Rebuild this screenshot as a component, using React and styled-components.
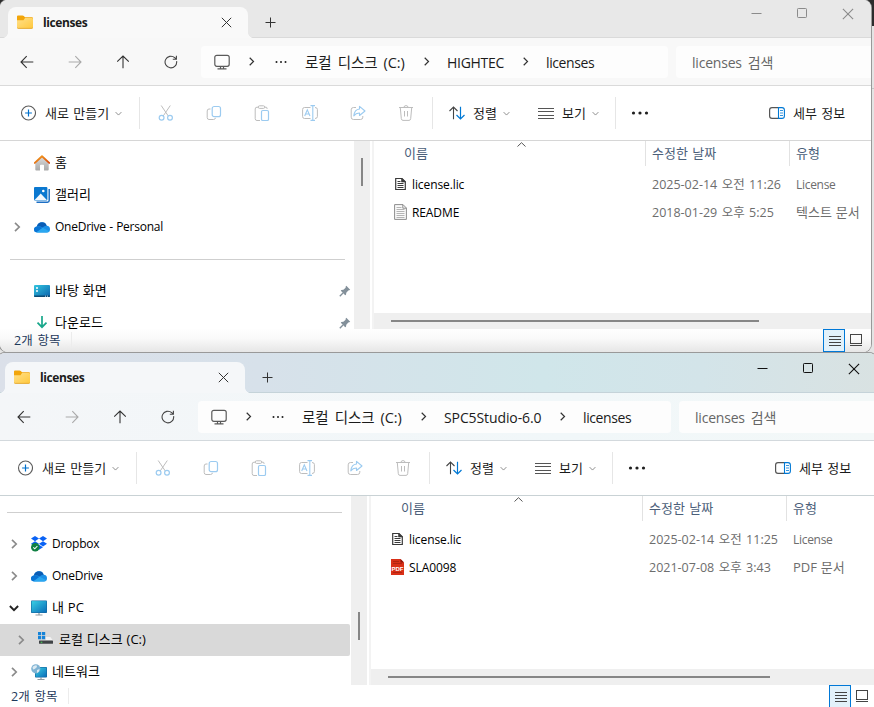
import React from "react"
import styled, { createGlobalStyle, css } from "styled-components"

const FONT = `"Open Sans", "Noto Sans CJK KR", sans-serif`

/* ---------- icons ---------- */

const FolderIcon = () => (
  <svg width="16" height="14" viewBox="0 0 16 14">
    <defs>
      <linearGradient id="folder" x1="0" y1="0" x2="1" y2="1">
        <stop offset="0" stopColor="#ffe08a" />
        <stop offset="1" stopColor="#ffc83d" />
      </linearGradient>
    </defs>
    <path d="M0 1.5Q0 .5 1 .5H5.5Q6.300 .5 6.800 1L8 2.300H15Q16 2.300 16 3.300V8H0Z" fill="#f2a50a" />
    <path d="M0 5.200H6.500L8 3H15Q16 3 16 4V12.500Q16 13.500 15 13.500H1Q0 13.500 0 12.500Z" fill="url(#folder)" />
    <path d="M.3 12.700Q.5 13.400 1.200 13.400H14.800Q15.500 13.400 15.700 12.700" stroke="#e0a020" strokeWidth=".8" fill="none" />
  </svg>
)

const CloseIcon = ({ size = 11 }) => (
  <svg width={size} height={size} viewBox="0 0 11 11" fill="none" stroke="currentColor" strokeWidth="1">
    <path d="M.8.8L10.200 10.200M10.200.8L.8 10.200" />
  </svg>
)

const PlusIcon = () => (
  <svg width="11" height="11" viewBox="0 0 11 11" stroke="#333">
    <path d="M5.500 .5V10.500M.5 5.500H10.500" />
  </svg>
)

const MinimizeIcon = () => (
  <svg width="12" height="11" viewBox="0 0 12 11" stroke="currentColor">
    <path d="M1.500 5.500H11.500" />
  </svg>
)

const MaximizeIcon = () => (
  <svg width="12" height="11" viewBox="0 0 12 11" fill="none" stroke="currentColor">
    <rect x="1.500" y=".5" width="9" height="9" rx=".8" />
  </svg>
)

const ArrowIcon = ({ turn = 0, color = "#333" }) => (
  <svg width="14" height="14" viewBox="0 0 14 14" fill="none" stroke={color} strokeWidth="1.100">
    <path transform={`rotate(${turn} 7 7)`} d="M6.700 1.200L1 7L6.700 12.800M1 7H13.300" />
  </svg>
)

const RefreshIcon = () => (
  <svg width="14" height="14" viewBox="0 0 14 14" fill="none" stroke="#444" strokeWidth="1.100">
    <path d="M12.600 6.200A5.800 5.800 0 1 1 10.700 2.700L12.300 4.200M12.400 .8V4.300H8.800" />
  </svg>
)

const MonitorIcon = () => (
  <svg width="16" height="16" viewBox="0 0 16 16" fill="none" stroke="#5a5a5a" strokeWidth="1.200">
    <rect x=".8" y="1.300" width="14.400" height="11" rx="2" />
    <path d="M6.500 12.500V14.600M9.500 12.500V14.600M3.500 14.800H12.500" />
  </svg>
)

const ChevronIcon = ({ color = "#333", stroke = 1.2, down, size = 9 }) => (
  <svg width={size} height={size} viewBox="0 0 9 9" fill="none" stroke={color} strokeWidth={stroke}>
    <path transform={down ? "rotate(90 4.5 4.5)" : undefined} d="M2.700 .8L6.500 4.500L2.700 8.200" />
  </svg>
)

const DotsIcon = ({ gap = 5, r = 1.1 }) => (
  <svg width="18" height="4" viewBox="0 0 18 4" fill="#1f1f1f">
    <circle cx={9 - gap} cy="2" r={r} />
    <circle cx="9" cy="2" r={r} />
    <circle cx={9 + gap} cy="2" r={r} />
  </svg>
)

const NewIcon = () => (
  <svg width="16" height="16" viewBox="0 0 16 16" fill="none">
    <circle cx="8.500" cy="8" r="7" stroke="#5c5c5c" strokeWidth="1.100" />
    <path d="M8.500 4.600V11.400M5.100 8H11.900" stroke="#0070cc" strokeWidth="1.200" />
  </svg>
)

const CutIcon = () => (
  <svg width="16" height="16" viewBox="0 0 16 16" fill="none">
    <path d="M3.200 .5L10.300 11M12.300 .5L5.200 11" stroke="#bdbdbd" />
    <circle cx="3.600" cy="12.700" r="2.400" stroke="#9ccbf0" strokeWidth="1.200" />
    <circle cx="12" cy="12.700" r="2.400" stroke="#9ccbf0" strokeWidth="1.200" />
  </svg>
)

const CopyIcon = () => (
  <svg width="16" height="16" viewBox="0 0 16 16" fill="none">
    <path d="M4.500 4H3Q1.200 4 1.200 6V12.500Q1.200 14.500 3 14.500H7.500Q9.300 14.500 9.500 12.800" stroke="#bdbdbd" />
    <rect x="6.200" y="1.500" width="8.300" height="10.200" rx="2" stroke="#9ccbf0" strokeWidth="1.200" />
  </svg>
)

const PasteIcon = () => (
  <svg width="16" height="16" viewBox="0 0 16 16" fill="none">
    <path d="M6 15.500H3Q1.200 15.500 1.200 13.700V4Q1.200 2.200 3 2.200H4.500M10.500 2.200H12Q13 2.200 13 3.200V4" stroke="#bdbdbd" />
    <rect x="4.300" y=".8" width="6.400" height="2.600" rx="1.200" stroke="#bdbdbd" />
    <rect x="7.500" y="5.500" width="7" height="10" rx="1.300" stroke="#9ccbf0" strokeWidth="1.200" />
  </svg>
)

const RenameIcon = () => (
  <svg width="16" height="16" viewBox="0 0 16 16" fill="none">
    <path d="M8.500 2.500H2.500Q.6 2.500 .6 4.500V11.500Q.6 13.500 2.500 13.500H8.500M13 2.500Q15.400 2.500 15.400 4.500V11.500Q15.400 13.500 13 13.500" stroke="#bdbdbd" />
    <path d="M10.800 .8V15.200M8.500 .6H13M8.500 15.400H13M2.700 11L5.300 4.800L8 11M3.600 9H7" stroke="#9ccbf0" strokeWidth="1.100" />
  </svg>
)

const ShareIcon = () => (
  <svg width="16" height="16" viewBox="0 0 16 16" fill="none">
    <path d="M6 2.500H3.500Q1.200 2.500 1.200 4.800V12.200Q1.200 14.500 3.500 14.500H10.500Q12.800 14.500 12.800 12.200V11" stroke="#bdbdbd" />
    <path d="M9.500 1.300L15 6L9.500 10.500V8Q6 7.800 3.800 10.800Q4.500 4.500 9.500 4Z" stroke="#9ccbf0" strokeWidth="1.100" strokeLinejoin="round" />
  </svg>
)

const TrashIcon = () => (
  <svg width="16" height="16" viewBox="0 0 16 16" fill="none" stroke="#bdbdbd">
    <path d="M1 2.500H15M6 2.300Q6 .6 8 .6Q10 .6 10 2.300M2.300 2.700L3.300 13.600Q3.500 15.400 5 15.400H11Q12.500 15.400 12.700 13.600L13.700 2.700M6.500 6V11.500M9.500 6V11.500" />
  </svg>
)

const SortIcon = () => (
  <svg width="17" height="14" viewBox="0 0 17 14" fill="none">
    <path d="M4.500 13.200V1M.5 5L4.500 1L8.500 5" stroke="#444" strokeWidth="1.100" />
    <path d="M11.500 .8V13M7.500 9L11.500 13L15.500 9" stroke="#0078d4" strokeWidth="1.200" />
  </svg>
)

const ViewIcon = () => (
  <svg width="16" height="11" viewBox="0 0 16 11" stroke="#555">
    <path d="M0 .5H16M0 3.500H16M0 7.500H16M0 10.500H16" />
  </svg>
)

const DetailsIcon = () => (
  <svg width="16" height="12" viewBox="0 0 16 12" fill="none">
    <path d="M9.500 .6H3Q.6 .6 .6 3V9Q.6 11.400 3 11.400H9.500" stroke="#555" strokeWidth="1.200" />
    <path d="M9.500 .6H13Q15.400 .6 15.400 3V9Q15.400 11.400 13 11.400H9.500Z" stroke="#0078d4" strokeWidth="1.100" />
    <path d="M11 3.500H14M11 6H14M11 8.500H14" stroke="#0078d4" strokeWidth=".8" />
  </svg>
)

const HomeIcon = () => (
  <svg width="16" height="16" viewBox="0 0 16 16">
    <defs>
      <linearGradient id="wall" x1="0" y1="0" x2="0" y2="1">
        <stop offset="0" stopColor="#dcdcdc" />
        <stop offset="1" stopColor="#a9a9a9" />
      </linearGradient>
      <linearGradient id="roof" x1="0" y1="0" x2="1" y2="1">
        <stop offset="0" stopColor="#f6a21d" />
        <stop offset="1" stopColor="#d64a12" />
      </linearGradient>
    </defs>
    <path d="M1.300 7.500L8 1.500L14.700 7.500V14.500Q14.700 15.400 13.800 15.400H10V10.500Q10 9.700 9.200 9.700H6.800Q6 9.700 6 10.500V15.400H2.200Q1.300 15.400 1.300 14.500Z" fill="url(#wall)" />
    <path d="M.8 7.900L8 1.300L15.200 7.900" fill="none" stroke="url(#roof)" strokeWidth="1.900" strokeLinecap="round" strokeLinejoin="round" />
  </svg>
)

const GalleryIcon = () => (
  <svg width="16" height="16" viewBox="0 0 16 16">
    <path d="M15.200 2V13.500Q15.200 15.200 13.500 15.200H2.500" fill="none" stroke="#1c6fc4" strokeWidth="1.500" />
    <rect width="13.400" height="13.600" rx="1" fill="#0a78d0" />
    <path d="M.6 13L6.700 6.500L12.800 13Z" fill="#f2f8fd" />
    <circle cx="9.300" cy="4" r="1.300" fill="#fff" />
  </svg>
)

const CloudIcon = () => (
  <svg width="16" height="11" viewBox="0 0 16 11">
    <path d="M3.300 10.500Q0 10.500 0 7.600Q0 5 2.800 4.500Q4.200 .3 8 .3Q11.600 .3 12.700 3.700Q16 4 16 7.200Q16 10.500 12.700 10.500Z" fill="#1b8fe6" />
    <path d="M2.800 4.500Q4.200 .3 8 .3Q11.600 .3 12.700 3.700Q10.500 3.500 8.500 5.500Q5.500 3.600 2.800 4.500Z" fill="#0a5db5" />
    <path d="M2.500 10.300Q0 10 0 7.600Q.2 4.800 3 4.500Q5.500 4 8.500 6Z" fill="#0a74d4" />
    <path d="M2.500 10.300L8.700 5.700L15.300 9.200Q14.400 10.500 12.700 10.500H3.300Z" fill="#2aa7f0" />
  </svg>
)

const DesktopIcon = () => (
  <svg width="16" height="12" viewBox="0 0 16 12">
    <defs>
      <linearGradient id="desk" x1="0" y1="0" x2="1" y2="1">
        <stop offset="0" stopColor="#33c6df" />
        <stop offset="1" stopColor="#0a62ae" />
      </linearGradient>
    </defs>
    <rect width="16" height="12" rx="1" fill="url(#desk)" />
    <path d="M0 10.500H16V11Q16 12 15 12H1Q0 12 0 11Z" fill="#0b4a75" />
    <path d="M2 3H4M2 6H4" stroke="#fff" strokeWidth="1.500" />
    <path d="M11 11.200H12M13 11.200H14" stroke="#fff" strokeWidth=".8" />
  </svg>
)

const DownloadIcon = () => (
  <svg width="16" height="16" viewBox="0 0 16 16" fill="none" stroke="#18a78b" strokeWidth="1.700">
    <path d="M8 1V12M3.500 7.700L8 12.200L12.500 7.700" />
  </svg>
)

const PinIcon = () => (
  <svg width="12" height="12" viewBox="0 0 12 12">
    <path d="M7.300 .8L11.200 4.700L10.300 5.300L9.300 5.400L7.300 7.700L7 9.800L6.200 10.200L1.800 5.800L2.300 5L4.400 4.700L6.600 2.700L6.700 1.500Z" fill="#83909a" />
    <path d="M4 8L.8 11.200" stroke="#83909a" strokeWidth="1.300" />
  </svg>
)

const DropboxIcon = () => (
  <svg width="16" height="16" viewBox="0 0 16 16">
    <g fill="#0a62f5">
      <path d="M4 0L8 2.600L4 5.200L0 2.600ZM12 0L16 2.600L12 5.200L8 2.600ZM4 5.200L8 7.800L4 10.400L0 7.800ZM12 5.200L16 7.800L12 10.400L8 7.800ZM8 8.800L12 11.300L8 13.800L4 11.300Z" />
    </g>
    <circle cx="4.300" cy="11.300" r="4.300" fill="#108043" />
    <path d="M2.300 11.300L3.800 12.800L6.400 10" fill="none" stroke="#fff" strokeWidth="1.100" />
  </svg>
)

const ScreenShape = ({ x = 0, y = 0, w = 16, h = 12.5 }) => (
  <g>
    <defs>
      <linearGradient id="screen" x1="0" y1="0" x2="1" y2="1">
        <stop offset="0" stopColor="#39d0e4" />
        <stop offset="1" stopColor="#0a6cb8" />
      </linearGradient>
    </defs>
    <path d={`M${x + w / 2} ${y + h}V${y + h + 2}M${x + w / 2 - 3.5} ${y + h + 2}H${x + w / 2 + 3.5}`} stroke="#8f9aa1" strokeWidth="1.200" />
    <rect x={x} y={y} width={w} height={h} rx=".8" fill="#15679f" />
    <rect x={x + 0.6} y={y + 0.6} width={w - 1.2} height={h - 1.2} fill="url(#screen)" />
  </g>
)

const PcIcon = () => (
  <svg width="16" height="16" viewBox="0 0 16 16">
    <ScreenShape y={0.5} />
  </svg>
)

const NetworkIcon = () => (
  <svg width="16" height="16" viewBox="0 0 16 16">
    <ScreenShape x={4} y={3} w={12} h={10.5} />
    <circle cx="4.800" cy="4.800" r="4.600" fill="#7fb3d3" />
    <path d="M1.500 3Q3.500 .8 5.500 1.200L6 3L3.800 5L2 5.500ZM6 6L8.500 5L8 7.500L6 9Z" fill="#dceaf2" />
  </svg>
)

const DriveIcon = () => (
  <svg width="16" height="16" viewBox="0 0 16 16">
    <path d="M0 0H3.200V3.200H0ZM4 0H7.200V3.200H4ZM0 4H3.200V7.200H0ZM4 4H7.200V7.200H4Z" fill="#1583d8" />
    <path d="M7.800 5H12.300L15 8.500H1.500L2.500 8H7.800Z" fill="#f2f2f2" />
    <rect x="1" y="8.500" width="14" height="3.300" rx=".6" fill="#3f4346" />
    <rect x="2.700" y="9.700" width="1.600" height="1.100" fill="#47d65b" />
  </svg>
)

const LicIcon = () => (
  <svg width="13" height="16" viewBox="0 0 13 16" fill="none" stroke="#3a3a3a">
    <path d="M1.700 2.500H8L11.300 5.700V13.500H1.700Z" strokeWidth="1.200" />
    <path d="M7.500 2V6H11.500Z" fill="#3a3a3a" strokeWidth=".6" />
    <path d="M3.500 5.500H6.500M3.500 7.500H9.500M3.500 9.500H9.500M3.500 11.500H9.500" />
  </svg>
)

const TxtIcon = () => (
  <svg width="13" height="16" viewBox="0 0 13 16" fill="none" stroke="#8d8d8d">
    <path d="M.6 .6H9L12.400 4V15.400H.6Z" fill="#fafafa" />
    <path d="M8.800 .6V4.200H12.400" />
    <path d="M2.500 3.500H7.500M2.500 5.500H10.500M2.500 7.500H10.500M2.500 9.500H10.500M2.500 11.500H10.500M2.500 13.500H10.500" stroke="#b5b5b5" />
  </svg>
)

const PdfIcon = () => (
  <svg width="13" height="16" viewBox="0 0 13 16">
    <path d="M0 0H9.500L13 3.500V16H0Z" fill="#d92f17" />
    <path d="M9.500 0L13 3.500H9.500Z" fill="#8c1408" />
    <path d="M2 2.500H8M2 4.500H11M2 13.500H11" stroke="#b02310" />
    <text x="6.500" y="11.500" textAnchor="middle" fontSize="6" fontWeight="700" fontFamily="Liberation Sans, sans-serif" fill="#fff">PDF</text>
  </svg>
)

const SortMark = () => (
  <svg width="9" height="5" viewBox="0 0 9 5" fill="none" stroke="#555">
    <path d="M.5 4.500L4.500 .7L8.500 4.500" />
  </svg>
)

const ListModeIcon = () => (
  <svg width="12" height="11" viewBox="0 0 12 11" stroke="#444">
    <path d="M0 1.500H12M0 4.500H12M0 7.500H12M0 10.500H12" />
  </svg>
)

const TileModeIcon = () => (
  <svg width="12" height="13" viewBox="0 0 12 13" fill="none" stroke="#444">
    <rect x=".5" y=".5" width="11" height="9" />
    <path d="M0 11.500H12" />
  </svg>
)

/* ---------- data ---------- */

const windows = [
  {
    id: "hightec",
    crumbs: [
      { text: "로컬 디스크 (C:)", width: 101, size: 14.5, space: -0.1 },
      { text: "HIGHTEC", width: 58, size: 14, space: -0.3 },
      { text: "licenses", width: 49, size: 14, space: -0.4 },
    ],
    nav: [
      { text: "홈", icon: <HomeIcon /> },
      { text: "갤러리", icon: <GalleryIcon /> },
      { text: "OneDrive - Personal", latin: true, icon: <CloudIcon />, closed: true },
      { line: true },
      { text: "바탕 화면", icon: <DesktopIcon />, pinned: true },
      { text: "다운로드", icon: <DownloadIcon />, pinned: true },
    ],
    files: [
      { name: "license.lic", icon: <LicIcon />, date: "2025-02-14 오전 11:26", type: "License", latinType: true },
      { name: "README", icon: <TxtIcon />, date: "2018-01-29 오후 5:25", type: "텍스트 문서" },
    ],
  },
  {
    id: "spc5",
    active: true,
    crumbs: [
      { text: "로컬 디스크 (C:)", width: 101, size: 14.5, space: -0.1 },
      { text: "SPC5Studio-6.0", width: 98, size: 14, space: -0.1 },
      { text: "licenses", width: 49, size: 14, space: -0.4 },
    ],
    nav: [
      { line: true },
      { text: "Dropbox", latin: true, icon: <DropboxIcon />, closed: true },
      { text: "OneDrive", latin: true, icon: <CloudIcon />, closed: true },
      { text: "내 PC", icon: <PcIcon />, open: true },
      { text: "로컬 디스크 (C:)", icon: <DriveIcon />, closed: true, selected: true },
      { text: "네트워크", icon: <NetworkIcon />, closed: true },
    ],
    files: [
      { name: "license.lic", icon: <LicIcon />, date: "2025-02-14 오전 11:25", type: "License", latinType: true },
      { name: "SLA0098", icon: <PdfIcon />, date: "2021-07-08 오후 3:43", type: "PDF 문서" },
    ],
  },
]

/* ---------- window ---------- */

const Explorer = ({ data }) => {
  const { active, crumbs, nav, files } = data

  return (
    <Window $active={active}>
      <TitleBar $active={active}>
        <Tab $active={active}>
          <FolderIcon />
          <TabName>licenses</TabName>
          <CloseIcon />
        </Tab>
        <NewTab>
          <PlusIcon />
        </NewTab>
        <Controls $active={active}>
          <Control>
            <MinimizeIcon />
          </Control>
          <Control>
            <MaximizeIcon />
          </Control>
          <Control>
            <CloseIcon size={12} />
          </Control>
        </Controls>
      </TitleBar>

      <AddressRow $active={active}>
        <NavButton>
          <ArrowIcon />
        </NavButton>
        <NavButton>
          <ArrowIcon turn={180} color="#aaa" />
        </NavButton>
        <NavButton>
          <ArrowIcon turn={90} />
        </NavButton>
        <NavButton>
          <RefreshIcon />
        </NavButton>
        <Address>
          <MonitorIcon />
          <CrumbArrow $before={17} $after={16}>
            <ChevronIcon />
          </CrumbArrow>
          <DotsIcon gap={4.5} r={1} />
          <CrumbGap />
          {crumbs.map((crumb, i) => (
            <React.Fragment key={crumb.text}>
              {i > 0 && (
                <CrumbArrow $before={16} $after={16}>
                  <ChevronIcon />
                </CrumbArrow>
              )}
              <Crumb $width={crumb.width} $size={crumb.size} $space={crumb.space}>
                {crumb.text}
              </Crumb>
            </React.Fragment>
          ))}
        </Address>
        <Search>licenses 검색</Search>
      </AddressRow>

      <Toolbar $active={active}>
        <ToolButton $width={139} $start={20}>
          <NewIcon />
          <ToolText $width={64} $gap={9}>새로 만들기</ToolText>
          <ChevronIcon down size={7} color="#888" />
        </ToolButton>
        <Divider />
        <Tools>
          {[CutIcon, CopyIcon, PasteIcon, RenameIcon, ShareIcon, TrashIcon].map((Icon, i) => (
            <Tool key={i}>
              <Icon />
            </Tool>
          ))}
        </Tools>
        <Divider />
        <ToolButton $width={89} $start={16}>
          <SortIcon />
          <ToolText $width={24} $gap={7}>정렬</ToolText>
          <ChevronIcon down size={7} color="#888" />
        </ToolButton>
        <ToolButton $width={93} $start={16}>
          <ViewIcon />
          <ToolText $width={24} $gap={8}>보기</ToolText>
          <ChevronIcon down size={7} color="#888" />
        </ToolButton>
        <Divider />
        <More>
          <DotsIcon gap={6.5} r={1.6} />
        </More>
        <Details>
          <DetailsIcon />
          <ToolText $width={53} $gap={8}>세부 정보</ToolText>
        </Details>
      </Toolbar>

      <Body $active={active}>
        <NavPane $active={active}>
          {nav.map((item, i) =>
            item.line ? (
              <NavLine key={i} />
            ) : (
              <NavItem key={i} $selected={item.selected}>
                <Expander>
                  {item.closed && <ChevronIcon color="#8a8a8a" stroke={1.5} size={10} />}
                  {item.open && <ChevronIcon color="#222" stroke={1.7} size={10} down />}
                </Expander>
                <NavIcon>{item.icon}</NavIcon>
                <NavText $latin={item.latin}>{item.text}</NavText>
                {item.pinned && <PinIcon />}
              </NavItem>
            )
          )}
        </NavPane>
        <VScroll $active={active}>
          <VThumb />
        </VScroll>
        <Files>
          <Header>
            <NameHead>
              이름
              <SortMark />
            </NameHead>
            <DateHead>수정한 날짜</DateHead>
            <TypeHead>유형</TypeHead>
          </Header>
          <Rows>
            {files.map(file => (
              <FileRow key={file.name}>
                <FileIcon>{file.icon}</FileIcon>
                <FileName>{file.name}</FileName>
                <FileDate>{file.date}</FileDate>
                <FileType $latin={file.latinType}>{file.type}</FileType>
              </FileRow>
            ))}
          </Rows>
          <HScroll>
            <HThumb $active={active} />
          </HScroll>
        </Files>
      </Body>

      <StatusBar $active={active}>
        <Count>2개 항목</Count>
        <ModeButton $on>
          <ListModeIcon />
        </ModeButton>
        <ModeButton>
          <TileModeIcon />
        </ModeButton>
      </StatusBar>
    </Window>
  )
}

const App = () => (
  <Desktop>
    <Global />
    {windows.map(data => (
      <Explorer key={data.id} data={data} />
    ))}
  </Desktop>
)

export default App

const Global = createGlobalStyle`
  * {
    box-sizing: border-box;
  }

  body {
    margin: 0;
    font-family: ${FONT};
    font-size: 12px;
    color: #1b1b1b;
    overflow: hidden;
  }

  svg {
    display: block;
    flex: none;
  }
`

const Desktop = styled.div`
  position: relative;
  width: 874px;
  height: 707px;
  overflow: hidden;
  background: linear-gradient(#2c2c2c 26px, #e4e4e4 26px, #e4e4e4 88px, #c4c4c4 88px, #c4c4c4 89px, #e4e4e4 89px);
`

/* the two windows sit freely on the desktop */
const Window = styled.section`
  position: absolute;
  top: ${p => (p.$active ? "353px" : "0")};
  left: ${p => (p.$active ? "-3px" : "0")};
  width: ${p => (p.$active ? "880px" : "871px")};
  height: ${p => (p.$active ? "356px" : "352px")};
  display: flex;
  flex-direction: column;
  overflow: hidden;
  background: #fff;
  border-radius: ${p => (p.$active ? "8px 8px 0 0" : "8px")};
  box-shadow: 0 0 0 1px #999;
`

const TitleBar = styled.header`
  height: ${p => (p.$active ? "40px" : "38px")};
  flex: none;
  display: flex;
  align-items: flex-start;
  padding: ${p => (p.$active ? "9px" : "7px")} 0 0 8px;
  background: ${p =>
    p.$active ? "linear-gradient(90deg, #dbe0e9, #d7e1ea 30%, #d0e6ea 62%, #d3e4e9 80%, #d9e2e2)" : "#e8e8e8"};
  border-bottom: 1px solid ${p => (p.$active ? "#c5d3d9" : "#dadada")};
`

const Tab = styled.div`
  position: relative;
  width: 240px;
  height: 31px;
  display: flex;
  align-items: center;
  padding: 0 16px 1px 9px;
  border-radius: 8px 8px 0 0;
  background: ${p => (p.$active ? "#f5f7f9" : "#f9f9f9")};
  color: #333;

  &::before,
  &::after {
    content: "";
    position: absolute;
    bottom: 0;
    width: 5px;
    height: 5px;
  }

  &::before {
    left: -5px;
    background: radial-gradient(circle at 0 0, transparent 4.5px, ${p => (p.$active ? "#f5f7f9" : "#f9f9f9")} 5px);
  }

  &::after {
    right: -5px;
    background: radial-gradient(circle at 100% 0, transparent 4.5px, ${p => (p.$active ? "#f5f7f9" : "#f9f9f9")} 5px);
  }
`

const TabName = styled.span`
  flex: 1;
  margin-left: 10px;
  font-size: 12px;
  font-weight: 700;
  letter-spacing: -0.4px;
  color: #1b1b1b;
`

const NewTab = styled.div`
  padding: 10px 17px;
`

const Controls = styled.div`
  display: flex;
  align-self: flex-start;
  margin-top: -7px;
  margin-left: auto;
  color: ${p => (p.$active ? "#111" : "#8b8b8b")};
`

const Control = styled.div`
  width: 46px;
  height: 27px;
  display: flex;
  align-items: center;
  justify-content: center;
`

const AddressRow = styled.div`
  height: 48px;
  flex: none;
  display: flex;
  align-items: center;
  padding-left: 3px;
  background: ${p => (p.$active ? "linear-gradient(90deg, #f4f6f8, #f1f7f9 65%, #f3f8f8)" : "#f8f8f8")};
  border-bottom: 1px solid ${p => (p.$active ? "#d3d9dd" : "#dadada")};
`

const NavButton = styled.div`
  width: 48px;
  display: flex;
  justify-content: center;
`

const Address = styled.div`
  flex: 2 0 467px;
  height: 32px;
  margin-left: 6px;
  display: flex;
  align-items: center;
  padding-left: 13px;
  border-radius: 4px;
  background: #fdfdfd;
`

const CrumbArrow = styled.span`
  margin-left: ${p => p.$before}px;
  margin-right: ${p => p.$after}px;
`

const CrumbGap = styled.span`
  width: 15px;
`

const Crumb = styled.span`
  width: ${p => p.$width}px;
  font-size: ${p => p.$size}px;
  letter-spacing: ${p => p.$space}px;
  word-spacing: 2.5px;
  white-space: nowrap;
  line-height: 20px;
  padding-top: 2px;
`

const Search = styled.div`
  flex: 1 0 195px;
  height: 32px;
  margin-left: 8px;
  padding: 1px 0 0 16px;
  line-height: 32px;
  font-size: 14px;
  letter-spacing: -0.2px;
  word-spacing: 2.5px;
  color: #666;
  border-radius: 4px 0 0 4px;
  background: #fdfdfd;
`

const Toolbar = styled.div`
  height: 55px;
  flex: none;
  display: flex;
  align-items: center;
  background: #fff;
  border-bottom: 1px solid ${p => (p.$active ? "#c9d2d5" : "#d6d6d6")};
`

const ToolButton = styled.div`
  width: ${p => p.$width}px;
  display: flex;
  align-items: center;
  padding-left: ${p => p.$start}px;
`

const ToolText = styled.span`
  width: ${p => p.$width}px;
  margin: 0 6px 0 ${p => p.$gap}px;
  padding-bottom: 2px;
  font-size: 13px;
  word-spacing: 1px;
  white-space: nowrap;
`

const Divider = styled.span`
  width: 1px;
  height: 32px;
  background: #e6e6e6;
`

const Tools = styled.div`
  display: flex;
  width: 292px;
  padding-left: 2px;
`

const Tool = styled.div`
  width: 48px;
  display: flex;
  justify-content: center;
`

const More = styled.div`
  margin-left: 15px;
`

const Details = styled.div`
  display: flex;
  align-items: center;
  margin-left: auto;
  padding-right: 19px;
`

const Body = styled.div`
  height: ${p => (p.$active ? "189px" : "188px")};
  flex: none;
  display: flex;
  overflow: hidden;
`

const NavPane = styled.nav`
  flex: none;
  width: 354px;
  padding-top: ${p => (p.$active ? "0" : "6px")};
`

const NavLine = styled.div`
  height: 32px;
  padding-top: 16px;

  &::before {
    content: "";
    display: block;
    height: 1px;
    margin: 0 9px 0 10px;
    background: #cfcfcf;
  }
`

const NavItem = styled.div`
  height: 32px;
  display: flex;
  align-items: center;
  margin-right: 1px;
  padding: 0 2px 0 0;

  ${p =>
    p.$selected &&
    css`
      padding-left: 7px;
      background: #d9d9d9;
      border-radius: 2px;
    `}
`

const Expander = styled.span`
  width: 34px;
  padding-left: 12px;
`

const NavIcon = styled.span`
  width: 16px;
`

const NavText = styled.span`
  flex: 1;
  margin-left: 5px;
  padding-bottom: ${p => (p.$latin ? "0" : "2px")};
  font-size: ${p => (p.$latin ? "12px" : "13px")};
  line-height: 16px;
  letter-spacing: ${p => (p.$latin ? "-0.25px" : "0")};
  word-spacing: 0.5px;
  color: #000;
`

const VScroll = styled.div`
  flex: none;
  width: 16px;
  padding: ${p => (p.$active ? "116px" : "17px")} 0 0 7px;
  background: #efefef;
`

const VThumb = styled.div`
  width: 2px;
  height: 28px;
  background: #868686;
`

const Files = styled.div`
  flex: 1;
  min-width: 0;
  display: flex;
  flex-direction: column;
  margin-left: 2px;
  border-left: 2px solid #f3f3f3;
`

const Header = styled.div`
  height: 25px;
  display: flex;
  font-size: 13px;
  line-height: 24px;
  color: #4c607a;
`

const NameHead = styled.div`
  position: relative;
  width: 271px;
  padding-left: 30px;

  svg {
    position: absolute;
    top: 1px;
    left: 143px;
  }
`

const DateHead = styled.div`
  width: 144px;
  padding-left: 6px;
  word-spacing: 1px;
  border-left: 1px solid #e2e2e2;
`

const TypeHead = styled(DateHead)`
  flex: 1;
`

const Rows = styled.div`
  flex: 1;
  padding-top: 4px;
`

const FileRow = styled.div`
  height: 28px;
  display: flex;
  align-items: center;
  white-space: nowrap;
  color: #6d6d6d;
`

const FileIcon = styled.span`
  width: 13px;
  margin-left: 20px;
`

const FileName = styled.span`
  width: 240px;
  margin-left: 5px;
  letter-spacing: -0.1px;
  color: #000;
`

const FileDate = styled.span`
  width: 144px;
  padding-bottom: 2px;
  font-size: 12.5px;
  word-spacing: 1.2px;
`

const FileType = styled.span`
  padding-bottom: ${p => (p.$latin ? "0" : "2px")};
  font-size: ${p => (p.$latin ? "12px" : "13px")};
  letter-spacing: ${p => (p.$latin ? "-0.3px" : "0")};
  word-spacing: 0.5px;
`

const HScroll = styled.div`
  height: 16px;
  padding: 7px 0 0 17px;
  background: #efefef;
`

const HThumb = styled.div`
  width: ${p => (p.$active ? "382px" : "368px")};
  height: 2px;
  background: #868686;
`

const StatusBar = styled.footer`
  flex: 1;
  display: flex;
  align-items: stretch;
  padding-right: 4px;
  background: ${p => (p.$active ? "#fff" : "linear-gradient(#fefefe, #fafafa 40%, #e6e6e6)")};
`

const Count = styled.span`
  width: 72px;
  height: 16px;
  margin: 3px auto 0 0;
  padding-left: 14px;
  line-height: 17px;
  font-size: 12.5px;
  word-spacing: 1.5px;
  color: #1e395b;
  border-right: 1px solid #ececec;
`

const ModeButton = styled.div`
  width: 22px;
  height: 23px;
  display: flex;
  align-items: center;
  justify-content: center;

  ${p =>
    p.$on &&
    css`
      padding-left: 1px;
      background: #e2f1fa;
      border: 1px solid #0078d7;
    `}
`
